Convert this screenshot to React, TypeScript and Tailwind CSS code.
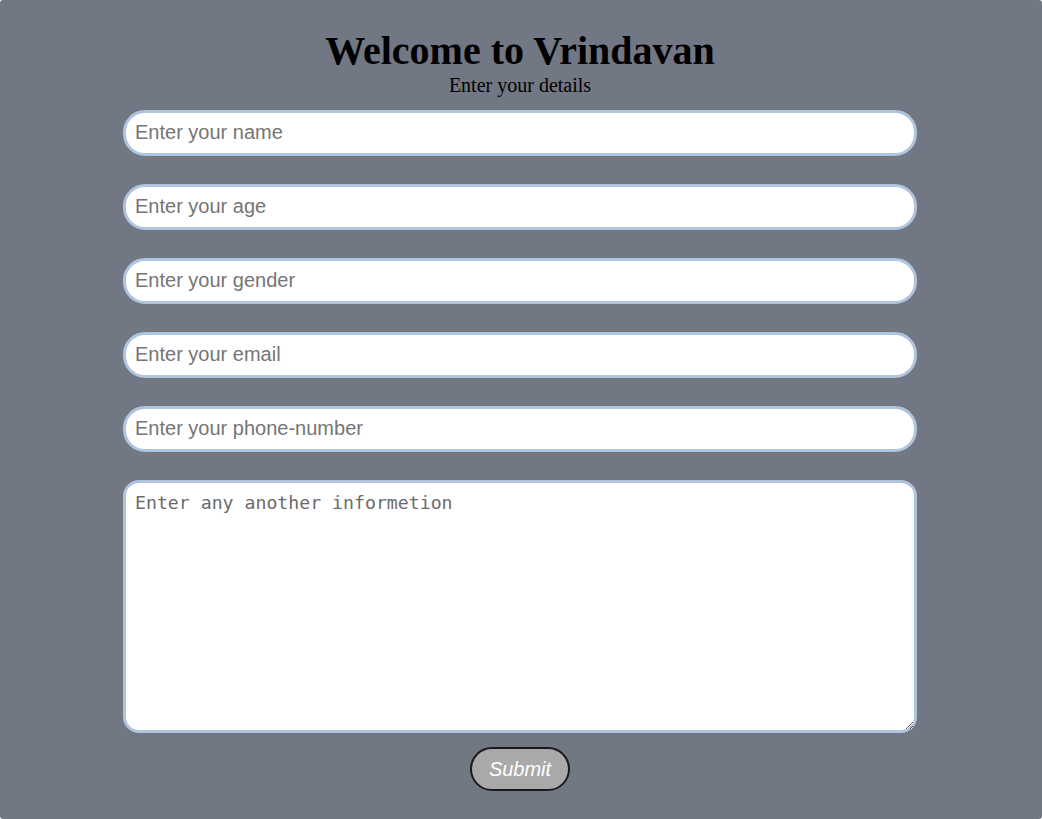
import { useState } from "react";

const FIELDS = [
	{ key: "name", placeholder: "Enter your name" },
	{ key: "age", placeholder: "Enter your age" },
	{ key: "gender", placeholder: "Enter your gender" },
	{ key: "email", placeholder: "Enter your email" },
	{ key: "phone", placeholder: "Enter your phone-number" },
] as const;

const inputClass =
	"h-[46px] w-full rounded-[22px] border-[3px] border-[#b0c4de] bg-white px-[9px] pb-[2px] font-['Liberation_Sans',Arial,sans-serif] text-[20px] text-black outline-none placeholder:text-[#757575]";

export default function App() {
	const [values, setValues] = useState<Record<string, string>>({});
	const [info, setInfo] = useState("");

	return (
		<div className="flex min-h-[819px] w-full flex-col items-center rounded-[3px] bg-[#717783] pr-[2px] pt-[28px]">
			<h1 className="font-['Liberation_Serif','Times_New_Roman',serif] text-[40px] leading-[46px] font-bold text-black">
				Welcome to Vrindavan
			</h1>
			<p className="font-['Liberation_Serif','Times_New_Roman',serif] text-[20px] leading-[23px] text-black">
				Enter your details
			</p>

			<form
				className="mt-[13px] flex w-[794px] flex-col items-center"
				onSubmit={(event) => {
					event.preventDefault();
				}}
			>
				<div className="flex w-full flex-col gap-[28px]">
					{FIELDS.map((field) => (
						<input
							key={field.key}
							className={inputClass}
							placeholder={field.placeholder}
							type="text"
							value={values[field.key] ?? ""}
							onChange={(event) => {
								setValues({ ...values, [field.key]: event.target.value });
							}}
						/>
					))}
					<textarea
						className="h-[253px] w-full rounded-[16px] border-[3px] border-[#b0c4de] bg-white px-[9px] py-[9px] font-['DejaVu_Sans_Mono',monospace] text-[18.2px] leading-[22px] text-black outline-none placeholder:text-[#6b6b6b]"
						placeholder="Enter any another informetion"
						value={info}
						onChange={(event) => {
							setInfo(event.target.value);
						}}
					/>
				</div>

				<button
					className="mt-[14px] h-[44px] w-[100px] shrink-0 rounded-full border-2 border-[#1a1a1a] bg-[#a9a9a9] font-['Liberation_Sans',Arial,sans-serif] text-[20px] text-white italic"
					type="submit"
				>
					Submit
				</button>
			</form>
		</div>
	);
}
